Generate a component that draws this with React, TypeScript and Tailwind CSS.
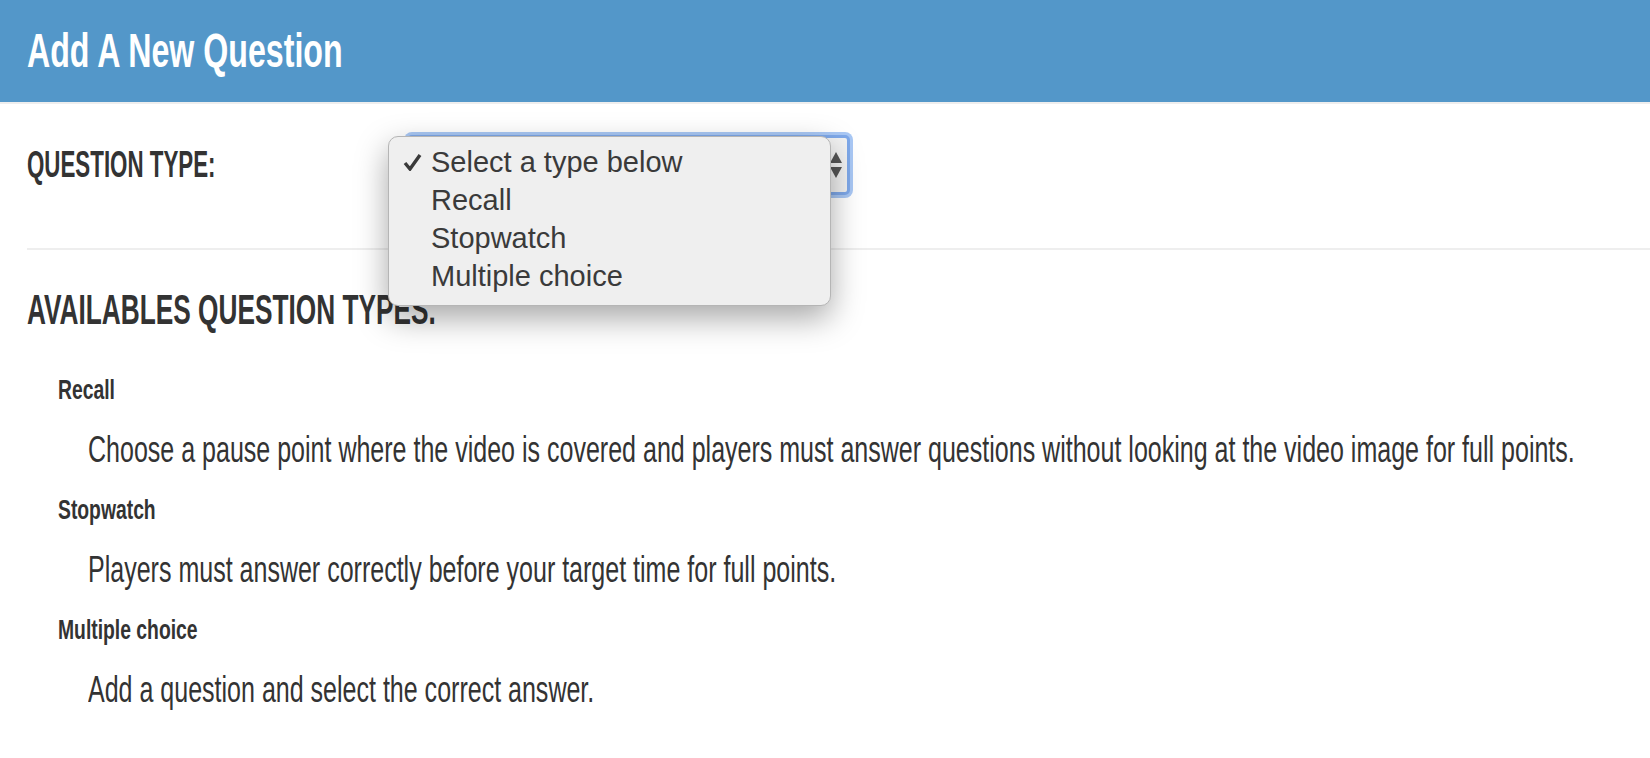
import React from 'react';

const types = [
  {
    name: 'Recall',
    text: 'Choose a pause point where the video is covered and players must answer questions without looking at the video image for full points.',
  },
  { name: 'Stopwatch', text: 'Players must answer correctly before your target time for full points.' },
  { name: 'Multiple choice', text: 'Add a question and select the correct answer.' },
];

const options = ['Select a type below', 'Recall', 'Stopwatch', 'Multiple choice'];

export default function App() {
  return (
    <div className="h-[758px] overflow-hidden bg-white text-[#333] font-['Liberation_Sans',sans-serif]">
      {/* Header */}
      <div className="h-[104px] bg-[#5397c9] border-b-2 border-[#eee] pl-[27px] flex items-center">
        <h1 className="text-[48px] font-bold leading-none text-white whitespace-nowrap origin-left scale-x-[0.67]">Add A New Question</h1>
      </div>

      <div className="pl-[27px]">
        {/* Type select */}
        <div className="relative h-[146px] border-b-2 border-[#eee] pt-[31px]">
          <div className="flex items-start">
            <label className="w-[380px] h-[60px] flex items-center text-[36px] font-bold leading-none whitespace-nowrap">
              <span className="origin-left scale-x-[0.62]">QUESTION TYPE:</span>
            </label>
            <div className="w-[443px] h-[60px] rounded-[5px] border-[3px] border-[#7fa9ea] bg-[#f3f3f3] shadow-[0_0_0_3px_#a9c8f5] flex items-center justify-end pr-[4px]">
              <svg width="14" height="28" viewBox="0 0 14 28" className="fill-[#555]">
                <path d="M7 1 13 12H1z" />
                <path d="M1 16h12L7 27z" />
              </svg>
            </div>
          </div>

          {/* Native-looking open menu */}
          <ul className="absolute left-[361px] top-[32px] w-[443px] h-[170px] z-10 py-[6px] rounded-[10px] border border-[#b5b5b5] bg-[#efefef] shadow-[0_12px_32px_rgba(0,0,0,0.35)] text-[29px] leading-[38px] text-[#3a3a3a]">
            {options.map((opt, i) => (
              <li key={opt} className="flex items-center h-[38px]">
                <span className="w-[42px] flex justify-end pr-[8px]">
                  {i === 0 && (
                    <svg width="20" height="18" viewBox="0 0 20 18" fill="none" stroke="#3a3a3a" strokeWidth="3.4">
                      <path d="M2 10l5 6L17 2" />
                    </svg>
                  )}
                </span>
                {opt}
              </li>
            ))}
          </ul>
        </div>

        <h2 className="mt-[34px] h-[52px] flex items-center text-[42px] font-bold leading-none whitespace-nowrap">
          <span className="origin-left scale-x-[0.625]">AVAILABLES QUESTION TYPES.</span>
        </h2>

        <dl className="mt-[24px] pl-[31px]">
          {types.map(t => (
            <React.Fragment key={t.name}>
              <dt className="h-[60px] flex items-center text-[28px] font-bold leading-none whitespace-nowrap">
                <span className="origin-left scale-x-[0.69]">{t.name}</span>
              </dt>
              <dd className="h-[60px] flex items-center pl-[30px] text-[36px] leading-none whitespace-nowrap">
                <span className="origin-left scale-x-[0.695]">{t.text}</span>
              </dd>
            </React.Fragment>
          ))}
        </dl>
      </div>
    </div>
  );
}
